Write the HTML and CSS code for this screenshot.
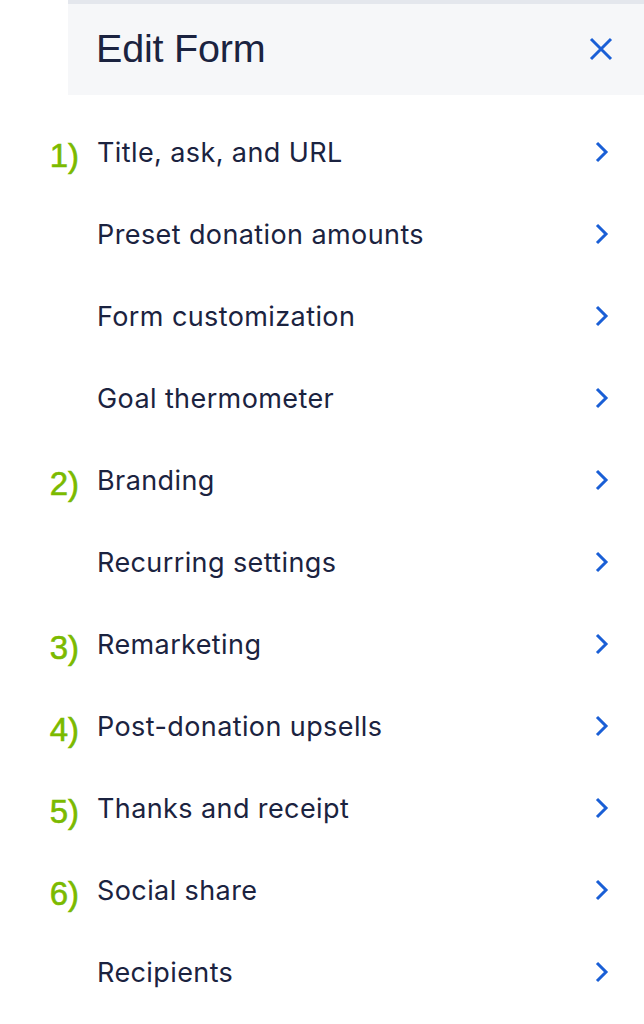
FILE: index.html
```html
<!DOCTYPE html>
<html>
<head>
<meta charset="utf-8">
<link rel="stylesheet" href="styles.css">
</head>
<body>
<div class="page">
  <header class="head">
    <h1 class="title">Edit Form</h1>
    <svg class="close" width="24" height="24" viewBox="0 0 24 24"><path d="M2 2 L22 22 M22 2 L2 22" stroke="#1a5fd6" stroke-width="3" fill="none"/></svg>
  </header>
  <ul class="list">
    <li class="row"><span class="num n1">1)</span><span class="label">Title, ask, and URL</span><svg class="chev" width="16" height="22" viewBox="0 0 16 22"><path d="M3 2 L12 11 L3 20" stroke="#1a5fd6" stroke-width="3" fill="none"/></svg></li>
    <li class="row"><span class="num"></span><span class="label">Preset donation amounts</span><svg class="chev" width="16" height="22" viewBox="0 0 16 22"><path d="M3 2 L12 11 L3 20" stroke="#1a5fd6" stroke-width="3" fill="none"/></svg></li>
    <li class="row"><span class="num"></span><span class="label">Form customization</span><svg class="chev" width="16" height="22" viewBox="0 0 16 22"><path d="M3 2 L12 11 L3 20" stroke="#1a5fd6" stroke-width="3" fill="none"/></svg></li>
    <li class="row"><span class="num"></span><span class="label">Goal thermometer</span><svg class="chev" width="16" height="22" viewBox="0 0 16 22"><path d="M3 2 L12 11 L3 20" stroke="#1a5fd6" stroke-width="3" fill="none"/></svg></li>
    <li class="row"><span class="num">2)</span><span class="label">Branding</span><svg class="chev" width="16" height="22" viewBox="0 0 16 22"><path d="M3 2 L12 11 L3 20" stroke="#1a5fd6" stroke-width="3" fill="none"/></svg></li>
    <li class="row"><span class="num"></span><span class="label">Recurring settings</span><svg class="chev" width="16" height="22" viewBox="0 0 16 22"><path d="M3 2 L12 11 L3 20" stroke="#1a5fd6" stroke-width="3" fill="none"/></svg></li>
    <li class="row"><span class="num">3)</span><span class="label">Remarketing</span><svg class="chev" width="16" height="22" viewBox="0 0 16 22"><path d="M3 2 L12 11 L3 20" stroke="#1a5fd6" stroke-width="3" fill="none"/></svg></li>
    <li class="row"><span class="num">4)</span><span class="label">Post-donation upsells</span><svg class="chev" width="16" height="22" viewBox="0 0 16 22"><path d="M3 2 L12 11 L3 20" stroke="#1a5fd6" stroke-width="3" fill="none"/></svg></li>
    <li class="row"><span class="num">5)</span><span class="label">Thanks and receipt</span><svg class="chev" width="16" height="22" viewBox="0 0 16 22"><path d="M3 2 L12 11 L3 20" stroke="#1a5fd6" stroke-width="3" fill="none"/></svg></li>
    <li class="row"><span class="num">6)</span><span class="label">Social share</span><svg class="chev" width="16" height="22" viewBox="0 0 16 22"><path d="M3 2 L12 11 L3 20" stroke="#1a5fd6" stroke-width="3" fill="none"/></svg></li>
    <li class="row"><span class="num"></span><span class="label">Recipients</span><svg class="chev" width="16" height="22" viewBox="0 0 16 22"><path d="M3 2 L12 11 L3 20" stroke="#1a5fd6" stroke-width="3" fill="none"/></svg></li>
  </ul>
</div>
</body>
</html>
```
FILE: styles.css
```css
html, body { margin: 0; padding: 0; background: #ffffff; }
.page { width: 644px; }
.head {
  margin-left: 68px;
  height: 91px;
  background: #f6f7f9;
  border-top: 4px solid #e4e7ed;
  display: flex;
  align-items: center;
  justify-content: space-between;
  padding: 0 31px 0 28px;
}
.title {
  margin: 0;
  font-family: "Liberation Sans", Arial, sans-serif;
  font-weight: normal;
  font-size: 39.5px;
  letter-spacing: -0.2px;
  color: #1b2340;
  position: relative;
  top: -1px;
}
.close { display: block; position: relative; top: -1px; }
.list {
  list-style: none;
  margin: 16px 0 0 0;
  padding: 0;
}
.row {
  height: 82px;
  display: flex;
  align-items: center;
  padding-right: 34px;
}
.num {
  width: 97px;
  box-sizing: border-box;
  padding-right: 18px;
  text-align: right;
  font-family: "Liberation Sans", Arial, sans-serif;
  font-size: 33px;
  color: #7bba00;
  -webkit-text-stroke: 0.6px #7bba00;
  position: relative;
  top: 4px;
}
.label {
  flex: 1;
  font-family: Inter, "Noto Sans", sans-serif;
  font-size: 27px;
  color: #1b2340;
  letter-spacing: 0.4px;
}
.chev { display: block; }
```
